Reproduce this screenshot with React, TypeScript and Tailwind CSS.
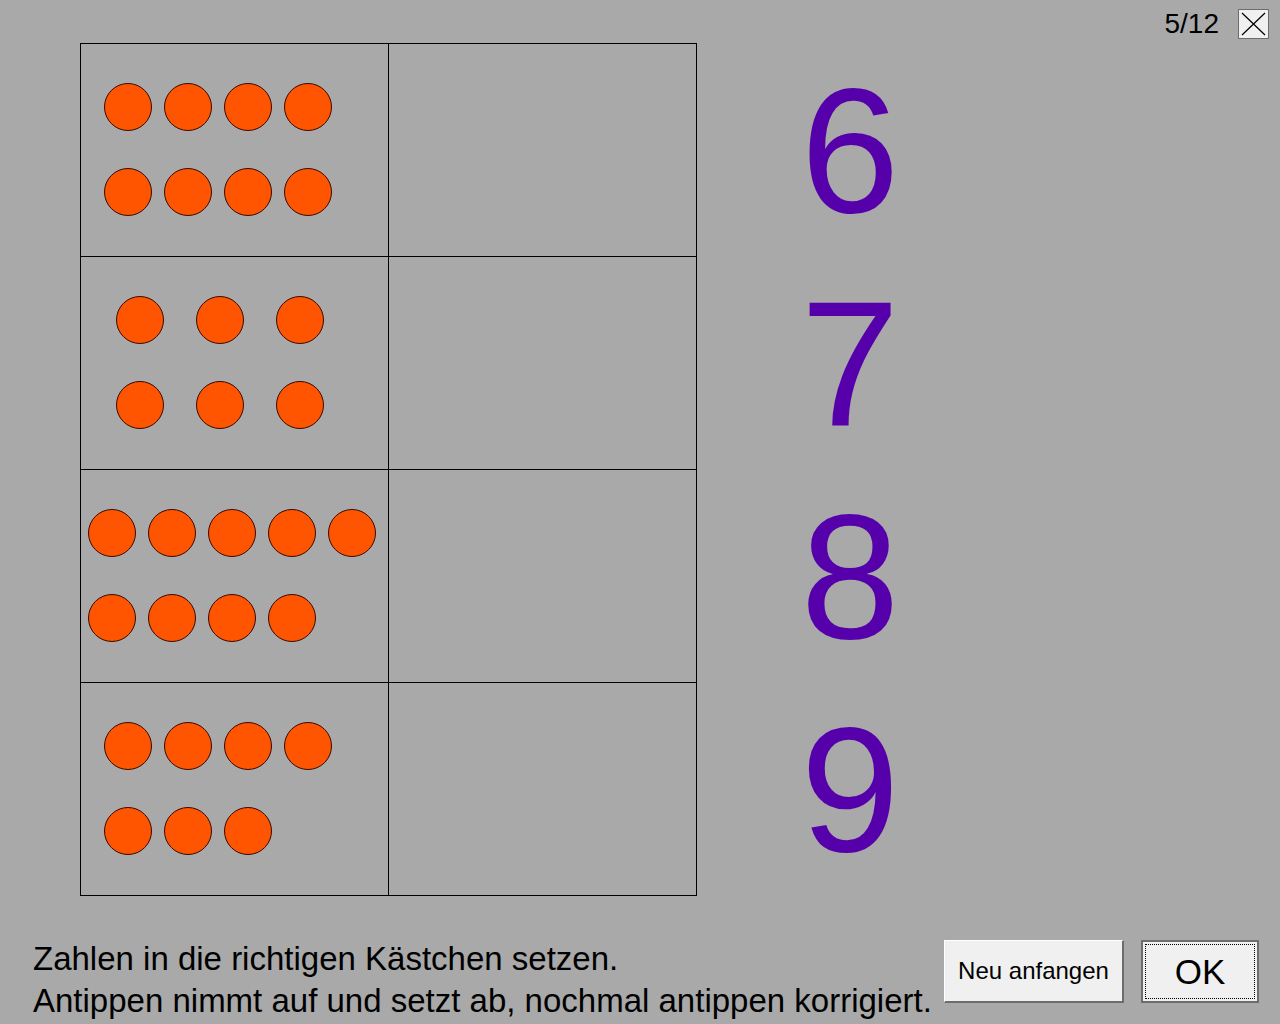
const rows: { counts: number[]; pl: string; gap: string }[] = [
  { counts: [4, 4], pl: 'pl-[23px]', gap: 'gap-[12px]' },
  { counts: [3, 3], pl: 'pl-[35px]', gap: 'gap-[32px]' },
  { counts: [5, 4], pl: 'pl-[7px]', gap: 'gap-[12px]' },
  { counts: [4, 3], pl: 'pl-[23px]', gap: 'gap-[12px]' },
];

const digits = ['6', '7', '8', '9'];

function Dot() {
  return <div className="w-12 h-12 rounded-full bg-[#ff5500] border border-[#3a0800] shrink-0" />;
}

export default function App() {
  return (
    <div
      className="w-[1280px] h-[1024px] bg-[#a9a9a9] flex flex-col text-black overflow-hidden"
      style={{ fontFamily: '"Liberation Sans", Arial, sans-serif' }}
    >
      {/* top bar */}
      <div className="h-[43px] flex justify-end items-start pt-[9px] pr-[11px] gap-[19px]">
        <div className="h-[30px] flex items-center text-[28px] leading-none">5/12</div>
        <button className="w-[31px] h-[30px] bg-[#f0f0f0] border border-[#6d6d6d] flex items-center justify-center">
          <svg width="25" height="24" viewBox="0 0 25 24" fill="none" stroke="black" strokeWidth="1.2">
            <path d="M1 1 L24 23 M24 1 L1 23" />
          </svg>
        </button>
      </div>

      {/* board */}
      <div className="flex pl-[80px]">
        <div className="w-[617px] border-t border-l border-black grid grid-cols-2">
          {rows.map((r, i) => (
            <div key={i} className="contents">
              <div className="h-[213px] border-r border-b border-black flex flex-col pt-[39px] gap-[37px]">
                {r.counts.map((n, j) => (
                  <div key={j} className={`flex ${r.pl} ${r.gap}`}>
                    {Array.from({ length: n }).map((_, k) => (
                      <Dot key={k} />
                    ))}
                  </div>
                ))}
              </div>
              <div className="h-[213px] border-r border-b border-black" />
            </div>
          ))}
        </div>
        <div className="w-[306px] flex flex-col pt-px">
          {digits.map((d) => (
            <div
              key={d}
              className="h-[213px] flex items-center justify-center text-[178px] leading-none text-[#5500aa]"
            >
              {d}
            </div>
          ))}
        </div>
      </div>

      {/* bottom */}
      <div className="flex items-start pt-[42px]">
        <div className="pl-[33px] w-[944px] text-[33px] leading-[42px]">
          <p>Zahlen in die richtigen Kästchen setzen.</p>
          <p className="whitespace-nowrap">Antippen nimmt auf und setzt ab, nochmal antippen korrigiert.</p>
        </div>
        <div className="flex gap-[17px] mt-[2px]">
          <button className="w-[180px] h-[63px] bg-[#f0f0f0] border-t border-l border-t-white border-l-white border-r-2 border-b-2 border-r-[#6d6d6d] border-b-[#6d6d6d] text-[24px] leading-none flex items-center justify-center">
            Neu anfangen
          </button>
          <button className="w-[118px] h-[63px] bg-[#f0f0f0] border-2 border-[#6d6d6d] outline-1 outline-dotted outline-black outline-offset-[-5px] text-[35px] leading-none flex items-center justify-center">
            OK
          </button>
        </div>
      </div>
    </div>
  );
}
